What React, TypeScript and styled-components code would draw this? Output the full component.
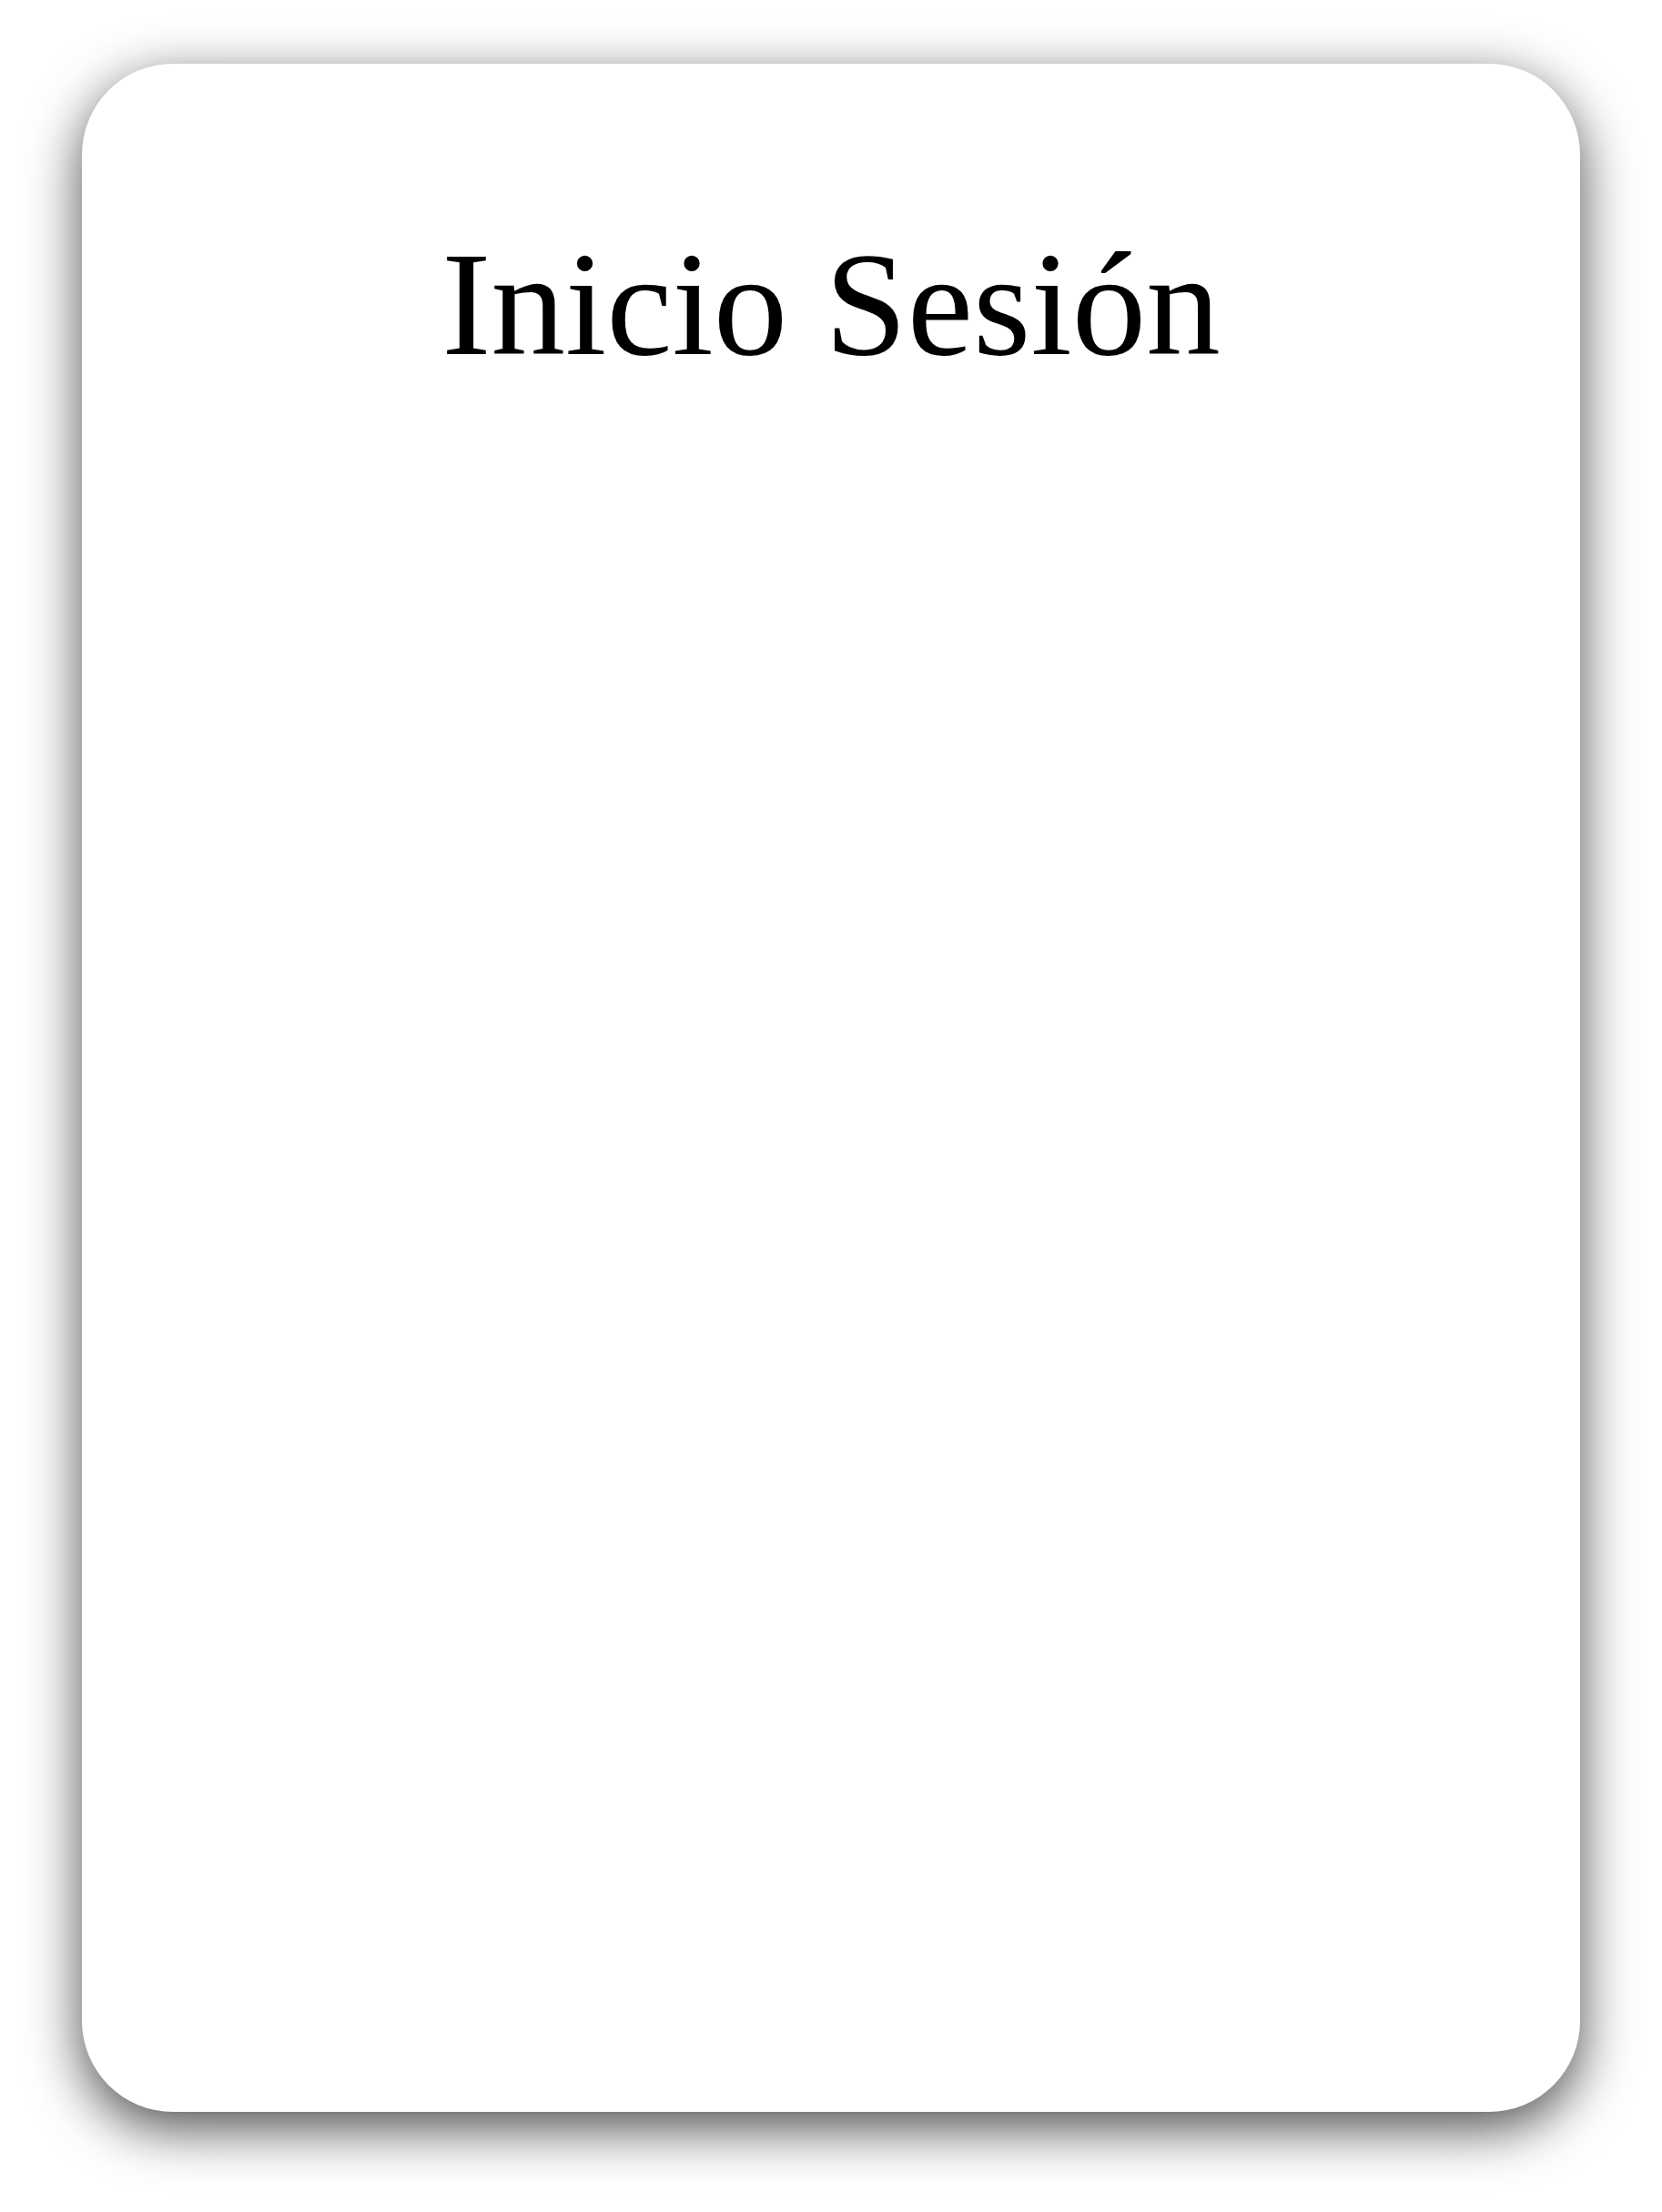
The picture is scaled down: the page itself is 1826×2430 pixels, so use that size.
import React from "react";
import styled, { createGlobalStyle } from "styled-components";

const GlobalStyle = createGlobalStyle`
  html, body {
    margin: 0;
    padding: 0;
    background: #ffffff;
  }
  body {
    font-family: "Liberation Serif", "Times New Roman", serif;
  }
`;

const Page = styled.main`
  box-sizing: border-box;
  width: 1826px;
  min-height: 2430px;
  padding: 70px 90px 110px;
`;

const Card = styled.section`
  box-sizing: border-box;
  height: 2250px;
  background: #ffffff;
  border-radius: 100px;
  box-shadow: 0 18px 60px rgba(0, 0, 0, 0.7);
  display: flex;
  flex-direction: column;
  align-items: center;
  padding-top: 174px;
`;

const Title = styled.h1`
  margin: 0;
  font-family: "Liberation Serif", "Times New Roman", serif;
  font-weight: 400;
  font-size: 163px;
  line-height: 180px;
  color: #000;
`;

export default function App() {
  return (
    <>
      <GlobalStyle />
      <Page>
        <Card>
          <Title>Inicio Sesión</Title>
        </Card>
      </Page>
    </>
  );
}
